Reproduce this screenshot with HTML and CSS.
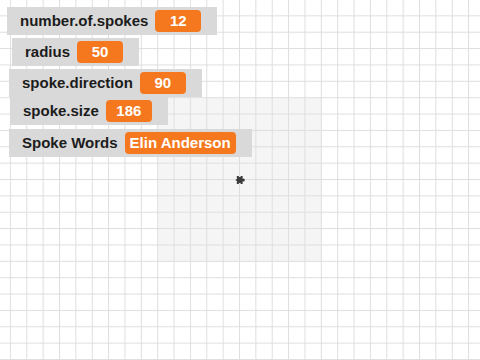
FILE: index.html
```html
<!DOCTYPE html>
<html lang="en">
<head>
  <meta charset="UTF-8" />
  <meta name="viewport" content="width=device-width, initial-scale=1.0"/>
  <title>Spokes</title>
  <link rel="stylesheet" href="styles.css">
</head>
<body>

<div class="stage">
  <svg class="canvas" width="480" height="360" viewBox="0 0 480 360">
    <defs>
      <pattern id="grid" patternUnits="userSpaceOnUse" x="239" y="179" width="16.3636" height="16.3636">
        <rect x="0" y="0" width="1" height="16.3636" fill="#dedede" />
        <rect x="0" y="0" width="16.3636" height="1" fill="#dedede" />
      </pattern>
    </defs>
    <rect x="158" y="98" width="164" height="164" fill="#f5f5f5" />
    <rect x="0" y="0" width="480" height="360" fill="url(#grid)" />
    <!-- turtle -->
    <g fill="#3a3a3a">
      <ellipse cx="239.8" cy="180" rx="3.2" ry="3" />
      <circle cx="243.3" cy="180" r="1.5" />
      <rect x="236.8" y="176" width="2" height="2" />
      <rect x="240.6" y="176" width="2" height="2" />
      <rect x="236.8" y="182" width="2" height="2" />
      <rect x="240.6" y="182" width="2" height="2" />
      <rect x="235.8" y="179.3" width="1.6" height="1.4" />
    </g>
  </svg>

  <div class="monitors">
    <div class="monitor m1"><span class="label">number.of.spokes</span><span class="value">12</span></div>
    <div class="monitor m2"><span class="label">radius</span><span class="value">50</span></div>
    <div class="monitor m3"><span class="label">spoke.direction</span><span class="value">90</span></div>
    <div class="monitor m4"><span class="label">spoke.size</span><span class="value">186</span></div>
    <div class="monitor m5"><span class="label">Spoke Words</span><span class="value">Elin Anderson</span></div>
  </div>
</div>

</body>
</html>
```

FILE: styles.css
```css
body {
  margin: 0;
  font-family: "Liberation Sans", Arial, sans-serif;
  background: #fff;
}
.stage {
  position: relative;
  width: 480px;
  height: 360px;
  overflow: hidden;
  background: #fff;
}
.canvas {
  position: absolute;
  top: 0;
  left: 0;
}
.monitors {
  position: relative;
  display: flex;
  flex-direction: column;
  align-items: flex-start;
  padding-top: 7px;
}
.monitor {
  display: flex;
  align-items: center;
  gap: 7px;
  padding: 3px 16px 3px 13px;
  background: #d9d9d9;
}
.label {
  font-size: 15px;
  font-weight: bold;
  color: #1c1c1c;
  line-height: 22px;
}
.value {
  min-width: 46px;
  box-sizing: border-box;
  padding: 0 5px;
  height: 22px;
  line-height: 22px;
  text-align: center;
  background: #f5781e;
  color: #fff;
  font-size: 15px;
  font-weight: bold;
  border-radius: 4px;
}
.m1 { margin-left: 7px; }
.m2 { margin: 3px 0 0 12px; }
.m3 { margin: 3px 0 0 9px; }
.m4 { margin: 0 0 0 10px; }
.m5 { margin: 4px 0 0 9px; }
```
